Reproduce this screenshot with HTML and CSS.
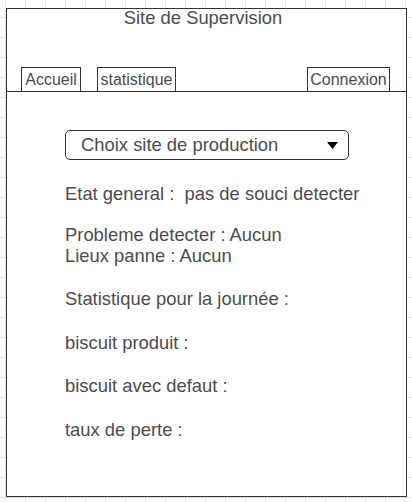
FILE: index.html
```html
<!DOCTYPE html>
<html lang="fr">
<head>
<meta charset="utf-8">
<title>Site de Supervision</title>
<link rel="stylesheet" href="styles.css">
</head>
<body>
<div class="frame">
  <header class="header">
    <h1 class="title">Site de Supervision</h1>
    <nav class="tabs">
      <a class="tab tab-home">Accueil</a>
      <a class="tab tab-stats">statistique</a>
      <a class="tab tab-login">Connexion</a>
    </nav>
  </header>
  <main class="content">
    <div class="select">
      <span class="select-label">Choix site de production</span>
      <svg class="select-arrow" width="11" height="7" viewBox="0 0 11 7"><polygon points="0,0 11,0 5.5,7" fill="#000"/></svg>
    </div>
    <p class="line state">Etat general :&nbsp; pas de souci detecter</p>
    <div class="problem">
      <p class="line">Probleme detecter : Aucun</p>
      <p class="line">Lieux panne : Aucun</p>
    </div>
    <div class="stats">
      <p class="line">Statistique pour la journée :</p>
      <p class="line">biscuit produit :</p>
      <p class="line">biscuit avec defaut :</p>
      <p class="line">taux de perte :</p>
    </div>
  </main>
</div>
</body>
</html>
```

FILE: styles.css
```css
html, body {
  margin: 0;
  padding: 0;
}

body {
  width: 412px;
  height: 502px;
  overflow: hidden;
  font-family: "Liberation Sans", Arial, sans-serif;
  color: #4c4c4c;
  background-color: #ffffff;
  background-image:
    linear-gradient(to right, #e4e4e4 1px, transparent 1px),
    linear-gradient(to bottom, #e4e4e4 1px, transparent 1px);
  background-size: 20px 20px;
  background-position: 5px 17px;
}

.frame {
  box-sizing: border-box;
  width: 401px;
  height: 489px;
  margin: 8px 0 0 6px;
  border: 1px solid #333333;
  background: #ffffff;
}

.header {
  box-sizing: border-box;
  height: 83px;
  border-bottom: 1px solid #333333;
  display: flex;
  flex-direction: column;
  justify-content: space-between;
}

.title {
  margin: 0;
  padding-right: 7px;
  font-size: 18.4px;
  font-weight: normal;
  line-height: 18px;
  text-align: center;
}

.tabs {
  display: flex;
  align-items: flex-end;
  padding: 0 16px 0 14px;
}

.tab {
  box-sizing: border-box;
  height: 24px;
  border: 1px solid #333333;
  border-bottom: none;
  font-size: 16px;
  line-height: 23px;
  text-align: center;
  color: #4c4c4c;
}

.tab-home {
  width: 60px;
}

.tab-stats {
  width: 79px;
  margin-left: 16px;
  line-height: 24px;
}

.tab-login {
  width: 83px;
  margin-left: auto;
  line-height: 24px;
}

.content {
  padding: 38px 0 0 58px;
  font-size: 18.4px;
}

.select {
  box-sizing: border-box;
  width: 284px;
  height: 30px;
  border: 1px solid #333333;
  border-radius: 5px;
  display: flex;
  align-items: center;
  justify-content: space-between;
  padding: 0 10px 0 15px;
}

.select-label {
  line-height: 28px;
}

.select-arrow {
  display: block;
  margin-top: 1px;
}

.line {
  margin: 0;
  line-height: 21px;
}

.state {
  margin-top: 23px;
}

.problem {
  margin-top: 20px;
}

.stats {
  margin-top: 22px;
  display: flex;
  flex-direction: column;
  gap: 22.7px;
}
```
